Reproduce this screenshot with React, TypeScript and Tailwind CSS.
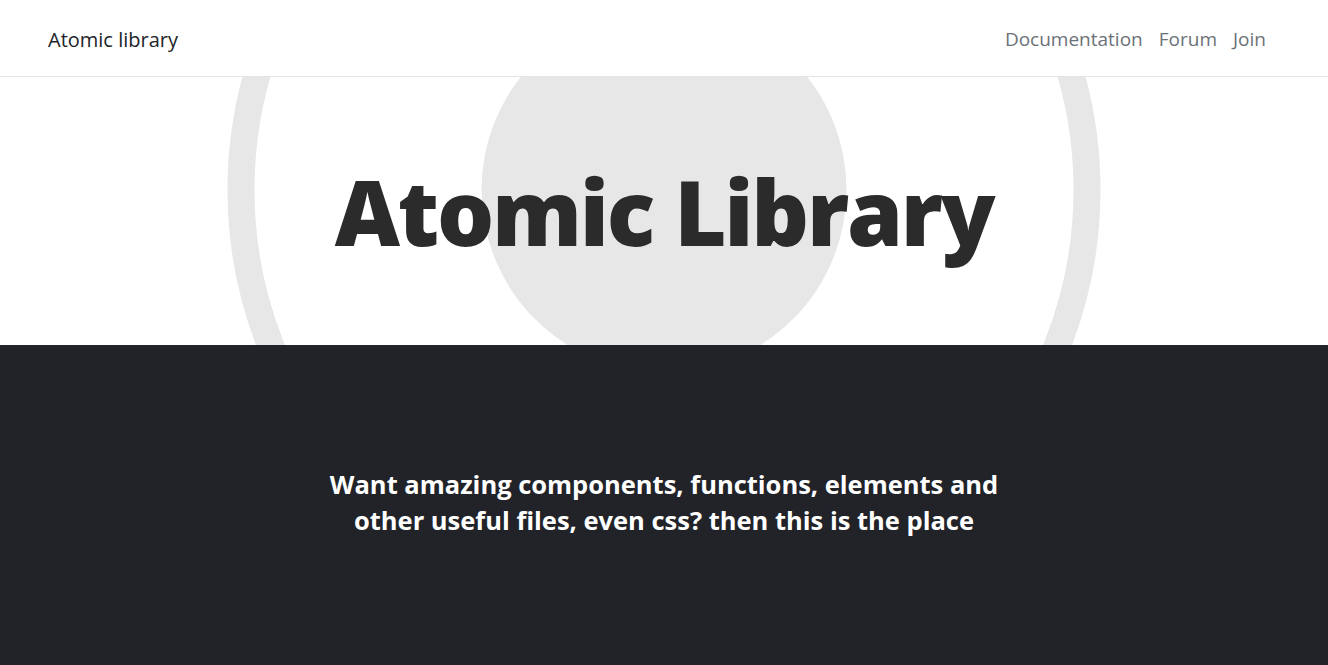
import React from 'react';

const navLinks = ['Documentation', 'Forum', 'Join'];

const Navbar: React.FC = () => (
  <nav className="relative z-10 h-[77px] flex items-center justify-between pl-12 pr-[62px] pt-[3px] bg-white border-b border-[#e5e5e5]">
    <a href="#" className="text-[20px] text-[#212529]">
      Atomic library
    </a>
    <div className="flex items-center gap-4">
      {navLinks.map((link) => (
        <a key={link} href="#" className="text-[19px] text-[#6c7278]">
          {link}
        </a>
      ))}
    </div>
  </nav>
);

const Hero: React.FC = () => (
  <header className="relative h-[268px] overflow-hidden flex items-center justify-center bg-white">
    {/* decorative rings */}
    <div className="absolute left-1/2 top-[113px] -translate-x-1/2 -translate-y-1/2 w-[873px] h-[873px] rounded-full border-[27px] border-[#e7e7e7]" />
    <div className="absolute left-1/2 top-[113px] -translate-x-1/2 -translate-y-1/2 w-[365px] h-[365px] rounded-full bg-[#e7e7e7]" />
    <h1 className="relative text-[90px] font-black leading-none text-[#2b2b2b] tracking-tight">Atomic Library</h1>
  </header>
);

const App: React.FC = () => {
  return (
    <div className="min-h-screen flex flex-col bg-white" style={{ fontFamily: "'Open Sans', 'Noto Sans', sans-serif" }}>
      <Navbar />
      <Hero />
      <section className="flex-1 flex justify-center pt-[121px] pb-32 bg-[#212329]">
        <p className="max-w-[700px] text-center text-[25.5px] font-bold leading-[36px] text-white">
          Want amazing components, functions, elements and other useful files, even css? then this is the place
        </p>
      </section>
    </div>
  );
};

export default App;
